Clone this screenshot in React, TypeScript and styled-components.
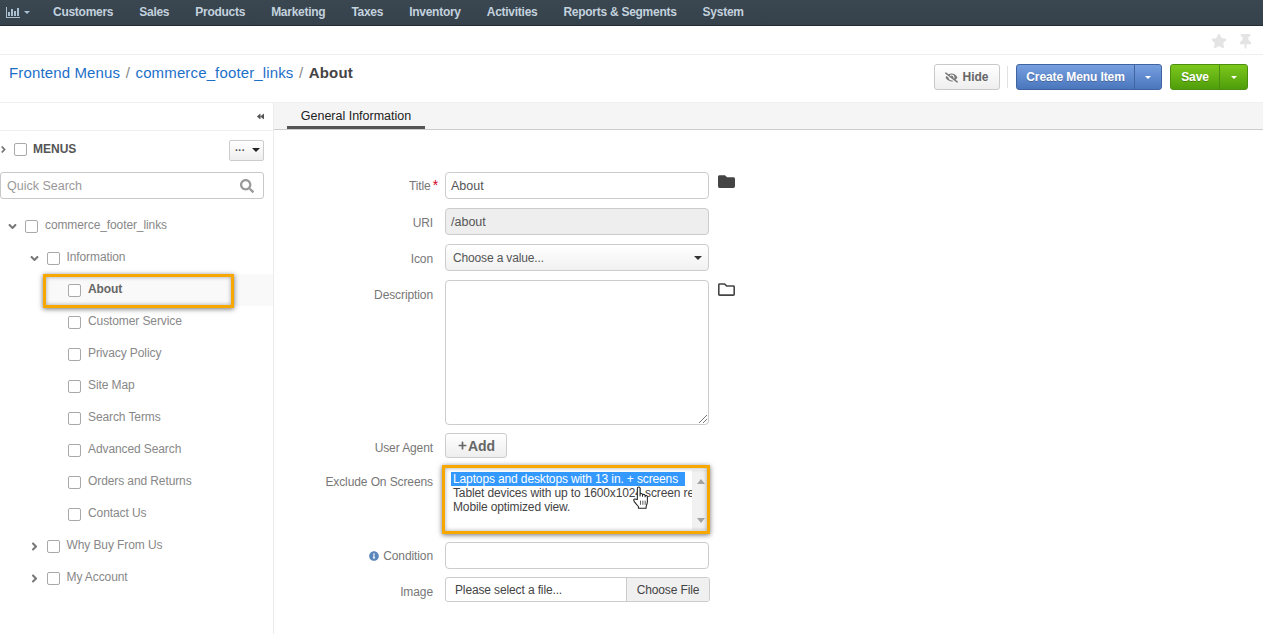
import React from "react";
import styled, { createGlobalStyle } from "styled-components";
import { FaStar, FaThumbtack, FaFolder, FaRegFolder, FaEyeSlash, FaSearch, FaPlus, FaInfoCircle, FaAngleDown, FaAngleRight, FaBackward } from "react-icons/fa";

const Global = createGlobalStyle`
  html, body { margin: 0; padding: 0; height: 100%; overflow: hidden; background: #fff; }
  body { font-family: "Liberation Sans", Arial, sans-serif; font-size: 12px; color: #444; }
  * { box-sizing: border-box; }
`;

const Page = styled.div`height: 634px; display: flex; flex-direction: column;`;

const Nav = styled.nav`
  height: 26px; flex: none; display: flex; align-items: center; gap: 26px; padding: 0 0 1px 6px;
  background: linear-gradient(#3a4751, #35414b); border-bottom: 1px solid #242d34;
`;
const NavLogo = styled.div`display: flex; align-items: center; gap: 4px; width: 21px; flex: none; color: #a9bfd2; svg { flex: none; } i { flex: none; }`;
const NavItem = styled.a`font-size: 12px; font-weight: 700; color: #c3d2de; letter-spacing: -0.27px;`;
const Caret = styled.i<{ $c?: string; $s?: number }>`
  display: inline-block; width: 0; height: 0;
  border-left: ${p => p.$s ?? 3}px solid transparent; border-right: ${p => p.$s ?? 3}px solid transparent;
  border-top: ${p => p.$s ?? 3}px solid ${p => p.$c ?? "#fff"};
`;

const TopStrip = styled.div`
  height: 29px; flex: none; display: flex; justify-content: flex-end; align-items: center; gap: 11px;
  padding: 2px 10px 0 0; border-bottom: 1px solid #eee; color: #e4e4e4;
`;

const TitleBar = styled.div`
  height: 47px; flex: none; display: flex; justify-content: space-between; align-items: flex-start; padding: 9px 15px 0 9px;
`;
const Crumbs = styled.div`font-size: 15px; line-height: 18px; color: #888; display: flex; gap: 5.5px; letter-spacing: 0.14px;`;
const CrumbLink = styled.a`color: #1c6fc9;`;
const CrumbCurrent = styled.b`color: #444;`;
const Actions = styled.div`display: flex; align-items: center;`;
const HideButton = styled.button`
  width: 66px; height: 26px; display: flex; align-items: center; justify-content: center; gap: 4px; padding: 0;
  font: 700 12px "Liberation Sans", Arial, sans-serif; color: #666;
  background: linear-gradient(#fff, #eee); border: 1px solid #c9c9c9; border-radius: 3px;
`;
const Divider = styled.span`width: 1px; height: 22px; background: #e2e2e2; margin: 0 8px 0 7px;`;
const Split = styled.div<{ $w: number; $edge: string; $a: string; $b: string }>`
  width: ${p => p.$w}px; height: 26px; display: flex; border: 1px solid ${p => p.$edge}; border-radius: 3px;
  background: linear-gradient(${p => p.$a}, ${p => p.$b}); color: #fff; font-weight: 700; font-size: 12px; letter-spacing: -0.1px;
  margin-left: ${p => (p.$w > 100 ? 0 : 8)}px; text-shadow: 0 1px 0 rgba(0,0,0,.25);
`;
const SplitMain = styled.span`flex: 1; display: flex; align-items: center; justify-content: center;`;
const SplitDrop = styled.span<{ $w: number; $edge: string }>`
  width: ${p => p.$w}px; display: flex; align-items: center; justify-content: center; border-left: 1px solid ${p => p.$edge};
`;

const Body = styled.div`flex: 1; display: flex; min-height: 0; border-top: 1px solid #f0f0f0;`;

const Sidebar = styled.aside`width: 274px; flex: none; border-right: 1px solid #ececec;`;
const CollapseRow = styled.div`
  height: 28px; display: flex; align-items: center; justify-content: flex-end; padding-right: 9px;
  border-bottom: 1px solid #eee; color: #555;
`;
const MenuHead = styled.div`height: 36px; display: flex; align-items: center; padding: 0 9px 0 0; color: #777;`;
const HeadArrow = styled.span`display: flex; margin: 0 5px 0 -2px;`;
const MenuTitle = styled.b`color: #555; font-size: 12px; flex: 1;`;
const MiniSelect = styled.div`
  width: 35px; height: 21px; margin-top: 2px; display: flex; align-items: center; justify-content: space-between; padding: 0 3px 0 5px;
  border: 1px solid #ccc; border-radius: 2px; background: linear-gradient(#fff, #eee); font-weight: 700; font-size: 10px; color: #444;
`;
const Search = styled.div`
  height: 27px; margin: 5px 9px 0 0; display: flex; align-items: center; justify-content: space-between; padding: 0 9px 0 6px;
  border: 1px solid #c8c8c8; border-radius: 3px; font-size: 12.5px; color: #999;
`;
const Tree = styled.div`margin-top: 11px;`;
const Row = styled.div<{ $level: number; $active?: boolean }>`
  height: 32px; position: relative; display: flex; align-items: center; font-size: 12px; letter-spacing: -0.1px;
  color: ${p => (p.$active ? "#666" : "#888")};
  padding-left: ${p => 7 + p.$level * 21.5}px; font-weight: ${p => (p.$active ? 700 : 400)};
  background: ${p => (p.$active ? "linear-gradient(90deg,#fff 46px,#f9f9f9 46px)" : "transparent")};
`;
const Arrow = styled.span`width: 11px; height: 12px; display: flex; align-items: center; justify-content: center; color: #777; margin-right: 7px;`;
const Check = styled.span<{ $mr?: number }>`
  width: 13px; height: 13px; flex: none; border: 1px solid #a9a9a9; border-radius: 2px; background: #fff; margin-right: ${p => p.$mr ?? 7}px;
`;
const RowLabel = styled.span`position: relative; top: -1px;`;

const Highlight = styled.div`
  position: absolute; border: 3px solid #f7a800; box-shadow: 0 1px 5px rgba(0,0,0,.55), inset 0 0 4px rgba(0,0,0,.35); pointer-events: none;
`;
const AboutHighlight = styled(Highlight)`left: 43px; top: 0; width: 191px; height: 34px;`;
const ScreensHighlight = styled(Highlight)`left: -3px; top: -5px; width: 268px; height: 69px;`;

const Main = styled.main`flex: 1; min-width: 0;`;
const Tabs = styled.div`height: 27px; background: #f5f5f5; border-bottom: 1px solid #ccc; padding-left: 13px;`;
const Tab = styled.div`
  width: 138px; height: 26px; display: flex; align-items: center; justify-content: center; font-size: 12.5px; color: #222;
  border-bottom: 3px solid #555; padding-top: 2px;
`;

const Form = styled.div`padding-top: 42px; display: flex; flex-direction: column;`;
const FormRow = styled.div<{ $mb?: number }>`display: flex; align-items: flex-start; margin-bottom: ${p => p.$mb ?? 9}px;`;
const Label = styled.label<{ $top?: number }>`
  width: 171px; flex: none; text-align: right; padding: ${p => p.$top ?? 8}px 12px 0 0; font-size: 12px; line-height: 14px; color: #777; letter-spacing: -0.1px;
`;
const Star = styled.span`color: #d0021b; font-size: 14px; line-height: 0; margin: 0 -5px 0 2px;`;
const Field = styled.div`
  width: 264px; height: 27px; flex: none; display: flex; align-items: center; padding: 0 5px; font-size: 12.5px; color: #555;
  border: 1px solid #ccc; border-radius: 4px; background: #fff;
`;
const ReadOnly = styled(Field)`background: #eee;`;
const SelectField = styled(Field)`background: linear-gradient(#fff, #f1f1f1); padding: 0 6px 0 7px; justify-content: space-between; font-size: 12px; letter-spacing: -0.15px;`;
const TextArea = styled(Field)`height: 145px; position: relative;`;
const Grip = styled.svg`position: absolute; right: 1px; bottom: 1px;`;
const SideIcon = styled.span`color: #444; margin-left: 9px; display: flex; margin-top: 1px;`;
const AddButton = styled.button`
  width: 62px; height: 25px; display: flex; align-items: center; justify-content: center; gap: 1px; padding: 0 0 0 1px;
  font: 700 14px "Liberation Sans", Arial, sans-serif; color: #666;
  background: linear-gradient(#fff, #eee); border: 1px solid #ccc; border-radius: 3px;
`;
const ListWrap = styled.div`width: 264px; height: 60px; flex: none; position: relative; display: flex; background: #fff;`;
const Options = styled.div`flex: 1; min-width: 0; overflow: hidden; padding: 2px 0 0 6px; font-size: 12px; line-height: 14px; color: #444; white-space: nowrap; letter-spacing: -0.13px;`;
const Option = styled.div<{ $on?: boolean }>`
  padding-left: 2px; width: 234px; height: 14px; ${p => p.$on && "background: #3399ff; color: #fff;"}
`;
const ScrollBar = styled.div`
  width: 17px; display: flex; flex-direction: column; justify-content: space-between; align-items: center; background: #f1f1f1; padding: 9px 0 7px;
`;
const Up = styled.i`width: 0; height: 0; border: 4px solid transparent; border-top: 0; border-bottom: 5px solid #a3a3a3;`;
const Down = styled.i`width: 0; height: 0; border: 4px solid transparent; border-bottom: 0; border-top: 5px solid #a3a3a3;`;
const Hand = styled.svg`position: absolute; left: 187px; top: 16px;`;
const InfoDot = styled.span`color: #5b87bd; margin-right: 4px; position: relative; top: 1px;`;
const FileField = styled.div`
  width: 265px; height: 25px; flex: none; display: flex; font-size: 12px; color: #444; border: 1px solid #ccc; border-radius: 3px; overflow: hidden; letter-spacing: -0.13px;
`;
const FileName = styled.span`flex: 1; display: flex; align-items: center; padding-left: 9px;`;
const FileButton = styled.span`width: 83px; display: flex; align-items: center; justify-content: center; background: #f0f0f0; border-left: 1px solid #ccc;`;

const navItems = ["Customers", "Sales", "Products", "Marketing", "Taxes", "Inventory", "Activities", "Reports & Segments", "System"];
const leaves = ["Customer Service", "Privacy Policy", "Site Map", "Search Terms", "Advanced Search", "Orders and Returns", "Contact Us"];

export default function App() {
  return (
    <Page>
      <Global />
      <Nav>
        <NavLogo>
          <svg width="14" height="11" viewBox="0 0 14 11" fill="currentColor">
            <path d="M0 0h1v10h13v1H0zM2 5h2v4H2zM5 2h2v7H5zM8 4h2v5H8zM11 1h2v8h-2z" />
          </svg>
          <Caret $c="#a9bfd2" />
        </NavLogo>
        {navItems.map(n => <NavItem key={n}>{n}</NavItem>)}
      </Nav>
      <TopStrip>
        <FaStar size={16} />
        <FaThumbtack size={15} />
      </TopStrip>
      <TitleBar>
        <Crumbs>
          <CrumbLink>Frontend Menus</CrumbLink>/<CrumbLink>commerce_footer_links</CrumbLink>/<CrumbCurrent>About</CrumbCurrent>
        </Crumbs>
        <Actions>
          <HideButton><FaEyeSlash size={13} color="#777" />Hide</HideButton>
          <Divider />
          <Split $w={146} $edge="#3f64a0" $a="#769fdf" $b="#4a76bd">
            <SplitMain>Create Menu Item</SplitMain>
            <SplitDrop $w={27} $edge="#3f64a0"><Caret /></SplitDrop>
          </Split>
          <Split $w={78} $edge="#4c8f10" $a="#7cc71c" $b="#4f9e0b">
            <SplitMain>Save</SplitMain>
            <SplitDrop $w={28} $edge="#4c8f10"><Caret /></SplitDrop>
          </Split>
        </Actions>
      </TitleBar>
      <Body>
        <Sidebar>
          <CollapseRow><FaBackward size={7} /></CollapseRow>
          <MenuHead>
            <HeadArrow><FaAngleRight size={11} /></HeadArrow>
            <Check $mr={6} />
            <MenuTitle>MENUS</MenuTitle>
            <MiniSelect>···<Caret $c="#222" $s={4} /></MiniSelect>
          </MenuHead>
          <Search>Quick Search<FaSearch size={14} color="#999" /></Search>
          <Tree>
            <Row $level={0}><Arrow><FaAngleDown size={13} /></Arrow><Check /><RowLabel>commerce_footer_links</RowLabel></Row>
            <Row $level={1}><Arrow><FaAngleDown size={13} /></Arrow><Check /><RowLabel>Information</RowLabel></Row>
            <Row $level={2} $active>
              <Arrow /><Check /><RowLabel>About</RowLabel>
              <AboutHighlight />
            </Row>
            {leaves.map(l => (
              <Row $level={2} key={l}><Arrow /><Check /><RowLabel>{l}</RowLabel></Row>
            ))}
            <Row $level={1}><Arrow><FaAngleRight size={13} /></Arrow><Check /><RowLabel>Why Buy From Us</RowLabel></Row>
            <Row $level={1}><Arrow><FaAngleRight size={13} /></Arrow><Check /><RowLabel>My Account</RowLabel></Row>
          </Tree>
        </Sidebar>
        <Main>
          <Tabs><Tab>General Information</Tab></Tabs>
          <Form>
            <FormRow>
              <Label $top={7}>Title<Star>*</Star></Label>
              <Field>About</Field>
              <SideIcon><FaFolder size={17} /></SideIcon>
            </FormRow>
            <FormRow>
              <Label>URI</Label>
              <ReadOnly>/about</ReadOnly>
            </FormRow>
            <FormRow>
              <Label>Icon</Label>
              <SelectField>Choose a value...<Caret $c="#333" $s={4} /></SelectField>
            </FormRow>
            <FormRow $mb={8}>
              <Label>Description</Label>
              <TextArea>
                <Grip width="8" height="8" viewBox="0 0 8 8" stroke="#777" fill="none"><path d="M0 8L8 0M4 8L8 4" /></Grip>
              </TextArea>
              <SideIcon><FaRegFolder size={17} /></SideIcon>
            </FormRow>
            <FormRow $mb={12}>
              <Label>User Agent</Label>
              <AddButton><FaPlus size={9} />Add</AddButton>
            </FormRow>
            <FormRow $mb={12}>
              <Label $top={5}>Exclude On Screens</Label>
              <ListWrap>
                <Options>
                  <Option $on>Laptops and desktops with 13 in. + screens</Option>
                  <Option>Tablet devices with up to 1600x1024 screen resolution</Option>
                  <Option>Mobile optimized view.</Option>
                </Options>
                <ScrollBar><Up /><Down /></ScrollBar>
                <Hand width="18" height="23" viewBox="0 0 16 22" fill="#fff" stroke="#222" strokeWidth="1" strokeLinejoin="round">
                  <path d="M4.5 12V2.2a1.3 1.3 0 0 1 2.6 0V9.5V8.3a1.2 1.2 0 0 1 2.4 0v1.4V9a1.2 1.2 0 0 1 2.4 0v1.2a1.1 1.1 0 0 1 2.2 0V15c0 2-.7 3-1.2 4.5v1.8H5.5v-1.6C4.5 18 1 15.5 1 13.5c0-1.3 1.5-1.5 3.5-.5z" />
                  <path d="M7.5 14v4M9.8 14v4M12 14v4" strokeWidth=".7" />
                </Hand>
                <ScreensHighlight />
              </ListWrap>
            </FormRow>
            <FormRow $mb={8}>
              <Label $top={7}><InfoDot><FaInfoCircle size={10} /></InfoDot>Condition</Label>
              <Field />
            </FormRow>
            <FormRow>
              <Label>Image</Label>
              <FileField>
                <FileName>Please select a file...</FileName>
                <FileButton>Choose File</FileButton>
              </FileField>
            </FormRow>
          </Form>
        </Main>
      </Body>
    </Page>
  );
}
